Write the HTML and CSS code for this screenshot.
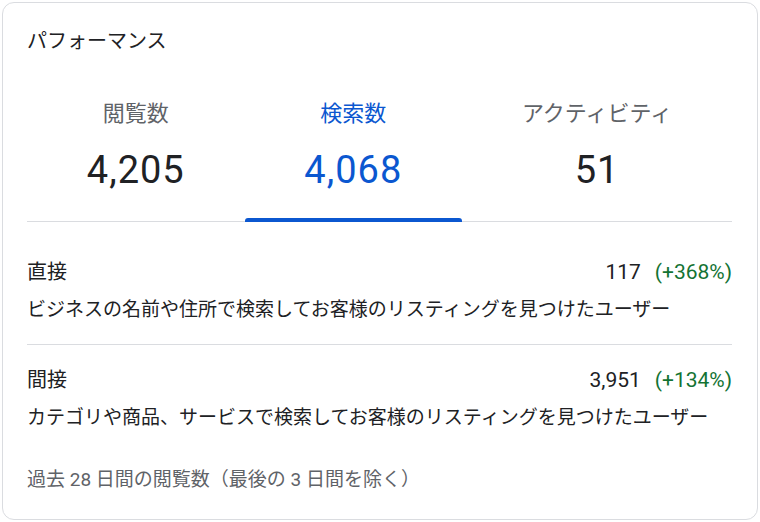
FILE: index.html
```html
<!DOCTYPE html>
<html lang="ja">
<head>
    <meta charset="UTF-8">
    <title>パフォーマンス</title>
    <link rel="stylesheet" href="styles.css">
</head>
<body>
    <div class="card">
        <h2 class="card-title">パフォーマンス</h2>

        <div class="tabs">
            <div class="tab">
                <div class="tab-label">閲覧数</div>
                <div class="tab-value">4,205</div>
            </div>
            <div class="tab tab-active">
                <div class="tab-label">検索数</div>
                <div class="tab-value">4,068</div>
            </div>
            <div class="tab">
                <div class="tab-label">アクティビティ</div>
                <div class="tab-value">51</div>
            </div>
        </div>

        <div class="rows">
            <div class="row">
                <div class="row-head">
                    <span class="row-name">直接</span>
                    <span class="row-count">117<span class="row-change">(+368%)</span></span>
                </div>
                <div class="row-desc">ビジネスの名前や住所で検索してお客様のリスティングを見つけたユーザー</div>
            </div>
            <div class="row">
                <div class="row-head">
                    <span class="row-name">間接</span>
                    <span class="row-count">3,951<span class="row-change">(+134%)</span></span>
                </div>
                <div class="row-desc">カテゴリや商品、サービスで検索してお客様のリスティングを見つけたユーザー</div>
            </div>
        </div>

        <p class="footnote">過去 28 日間の閲覧数（最後の 3 日間を除く）</p>
    </div>
</body>
</html>
```

FILE: styles.css
```css
body {
    margin: 0;
    padding: 2px;
    background: #fff;
    font-family: Roboto, "Noto Sans CJK JP", sans-serif;
    color: #202124;
}

.card {
    box-sizing: border-box;
    width: 756px;
    height: 518px;
    border: 1px solid #dadce0;
    border-radius: 12px;
    padding: 24px 25px 0 24px;
    background: #fff;
}

.card-title {
    margin: 0;
    font-size: 20px;
    font-weight: 400;
    line-height: 28px;
}

/* tab strip */
.tabs {
    display: flex;
    border-bottom: 1px solid #dadce0;
}

.tab {
    flex: 1 1 auto;
    position: relative;
    padding: 45px 0 31px;
    text-align: center;
}

.tab-label {
    font-size: 22px;
    line-height: 28px;
    color: #5f6368;
}

.tab-value {
    margin-top: 22px;
    font-size: 38px;
    line-height: 40px;
    letter-spacing: 1px;
    color: #202124;
}

.tab-active .tab-label,
.tab-active .tab-value {
    color: #0b57d0;
}

.tab-active::after {
    content: "";
    position: absolute;
    left: 0;
    right: 0;
    bottom: -1px;
    height: 4px;
    background: #0b57d0;
    border-radius: 3px 3px 0 0;
}

/* breakdown rows */
.rows {
    margin-top: 15px;
}

.row {
    padding: 21px 0 20px;
}

.row + .row {
    border-top: 1px solid #dadce0;
}

.row-head {
    display: flex;
    justify-content: space-between;
    font-size: 20px;
    line-height: 28px;
}

.row-count {
    font-size: 21px;
}

.row-change {
    margin-left: 14px;
    color: #137333;
}

.row-desc {
    margin-top: 10px;
    font-size: 19px;
    line-height: 28px;
    white-space: nowrap;
}

.footnote {
    margin: 16px 0 0;
    font-size: 19px;
    line-height: 24px;
    color: #5f6368;
}
```
